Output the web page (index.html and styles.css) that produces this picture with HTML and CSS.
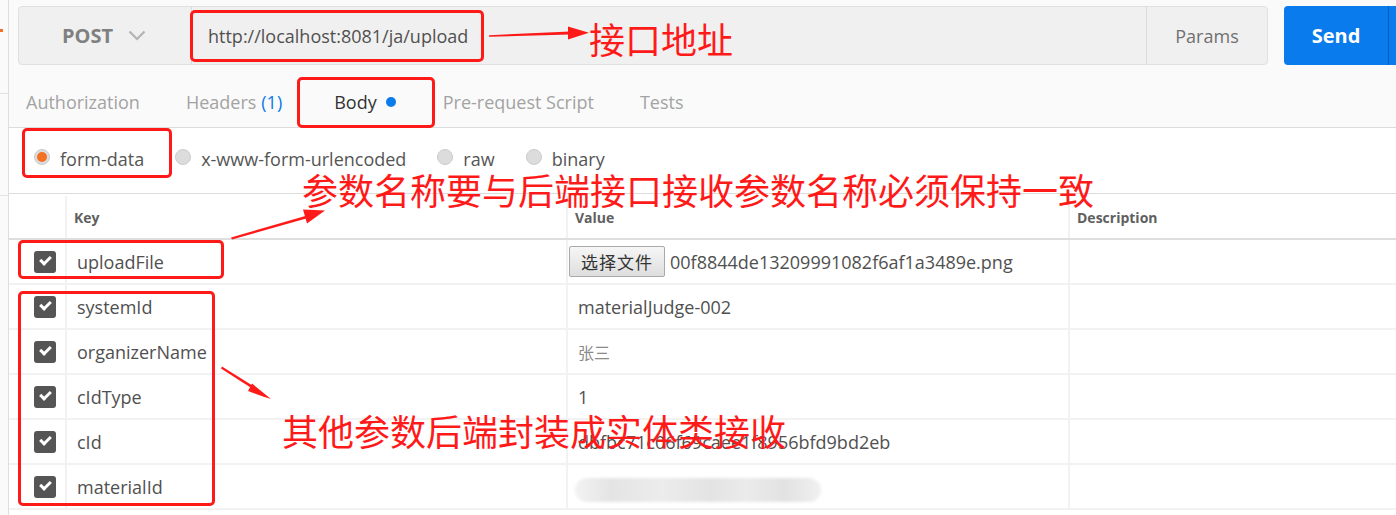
FILE: index.html
```html
<!DOCTYPE html>
<html lang="zh-CN">
<head>
    <meta charset="UTF-8">
    <title>Postman - form-data upload</title>
    <link rel="stylesheet" href="styles.css">
</head>
<body>
    <div class="app">
        <aside class="sidebar">
            <span class="sidebar-mark"></span>
            <span class="sidebar-line line-a"></span>
            <span class="sidebar-line line-b"></span>
        </aside>

        <main class="builder">
            <div class="request-bar">
                <div class="url-box">
                    <div class="method">
                        POST
                        <svg class="chevron" width="18" height="11" viewBox="0 0 18 11">
                            <path d="M1.5 1.5 L9 9 L16.5 1.5" fill="none" stroke="#b3b3b3" stroke-width="2.2"/>
                        </svg>
                    </div>
                    <div class="url">http://localhost:8081/ja/upload</div>
                    <div class="params">Params</div>
                </div>
                <div class="send-group">
                    <button class="send">Send</button>
                    <span class="send-more"></span>
                </div>
            </div>

            <nav class="tabs">
                <span class="tab">Authorization</span>
                <span class="tab">Headers <em class="count">(1)</em></span>
                <span class="tab active">Body <i class="dot"></i></span>
                <span class="tab">Pre-request Script</span>
                <span class="tab">Tests</span>
            </nav>

            <div class="body-types">
                <label class="radio checked"><span class="circle"></span>form-data</label>
                <label class="radio"><span class="circle"></span>x-www-form-urlencoded</label>
                <label class="radio"><span class="circle"></span>raw</label>
                <label class="radio"><span class="circle"></span>binary</label>
            </div>

            <div class="kv-table">
                <div class="kv-row head">
                    <div class="cell check-cell"></div>
                    <div class="cell">Key</div>
                    <div class="cell">Value</div>
                    <div class="cell">Description</div>
                </div>
                <div class="kv-row">
                    <div class="cell check-cell"><span class="check"></span></div>
                    <div class="cell">uploadFile</div>
                    <div class="cell"><button class="file-btn">选择文件</button><span class="file-name">00f8844de13209991082f6af1a3489e.png</span></div>
                    <div class="cell"></div>
                </div>
                <div class="kv-row">
                    <div class="cell check-cell"><span class="check"></span></div>
                    <div class="cell">systemId</div>
                    <div class="cell">materialJudge-002</div>
                    <div class="cell"></div>
                </div>
                <div class="kv-row">
                    <div class="cell check-cell"><span class="check"></span></div>
                    <div class="cell">organizerName</div>
                    <div class="cell muted">张三</div>
                    <div class="cell"></div>
                </div>
                <div class="kv-row">
                    <div class="cell check-cell"><span class="check"></span></div>
                    <div class="cell">cIdType</div>
                    <div class="cell">1</div>
                    <div class="cell"></div>
                </div>
                <div class="kv-row">
                    <div class="cell check-cell"><span class="check"></span></div>
                    <div class="cell">cId</div>
                    <div class="cell">dbfbc71c06f69caee1f8956bfd9bd2eb</div>
                    <div class="cell"></div>
                </div>
                <div class="kv-row">
                    <div class="cell check-cell"><span class="check"></span></div>
                    <div class="cell">materialId</div>
                    <div class="cell"><span class="blurred"></span></div>
                    <div class="cell"></div>
                </div>
            </div>
        </main>

        <!-- 标注 -->
        <div class="mark box-url"></div>
        <div class="mark box-body"></div>
        <div class="mark box-form"></div>
        <div class="mark box-file"></div>
        <div class="mark box-others"></div>

        <svg class="arrows" width="1396" height="515" viewBox="0 0 1396 515">
            <g fill="#ff1a1a">
                <polygon points="489,35.2 570,31.6 570,34.4 489,36.8"/>
                <polygon points="568,26.5 589,32.7 568,39.5"/>
                <polygon points="231,237.5 307,215.5 308,218 232,239.5"/>
                <polygon points="303,209.5 325,210.5 307,223.5"/>
                <polygon points="222,366.5 258,389 256.6,391.5 221,368.5"/>
                <polygon points="252,383.5 271,399 263,396.5 248,391"/>
            </g>
        </svg>

        <div class="note note-url">接口地址</div>
        <div class="note note-name">参数名称要与后端接口接收参数名称必须保持一致</div>
        <div class="note note-others">其他参数后端封装成实体类接收</div>
    </div>
</body>
</html>
```

FILE: styles.css
```css
:root {
    --bar-bg: #f0f0f0;
    --line: #dcdcdc;
    --row-line: #f2f2f2;
    --text: #505050;
    --tab-text: #a3a3a3;
    --blue: #097bed;
    --orange: #f47023;
    --mark: #ff1a1a;
}

html, body {
    margin: 0;
    padding: 0;
}

body {
    font-family: 'Open Sans', 'Noto Sans', 'Noto Sans CJK SC', sans-serif;
    color: var(--text);
    background-color: #fff;
    width: 1396px;
    height: 515px;
    overflow: hidden;
}

.app {
    position: relative;
    display: flex;
    height: 515px;
}

.sidebar {
    position: relative;
    width: 8px;
    flex-shrink: 0;
    background-color: #fafafa;
    border-right: 1px solid #dedede;
}

.sidebar-mark {
    position: absolute;
    left: 0;
    top: 29px;
    width: 3px;
    height: 3px;
    background-color: var(--orange);
}

.sidebar-line {
    position: absolute;
    left: 0;
    width: 8px;
    height: 1px;
    background-color: #e2e2e2;
}

.line-a { top: 93px; }
.line-b { top: 195px; }

.builder {
    flex: 1;
    min-width: 0;
}

/* 请求地址栏 */
.request-bar {
    display: flex;
    padding: 6px 0 0 9px;
    height: 59px;
    background-color: #fafafa;
}

.url-box {
    flex: 1;
    display: flex;
    background-color: var(--bar-bg);
    border: 1px solid #e0e0e0;
    border-radius: 4px;
}

.method {
    width: 173px;
    display: flex;
    align-items: center;
    padding-left: 43px;
    box-sizing: border-box;
    font-size: 20px;
    font-weight: 700;
    color: #808080;
    border-right: 1px solid #dadada;
}

.chevron {
    margin-left: 15px;
}

.url {
    flex: 1;
    display: flex;
    align-items: center;
    padding-left: 16px;
    font-size: 18px;
    color: #505050;
}

.params {
    width: 120px;
    display: flex;
    align-items: center;
    justify-content: center;
    font-size: 18px;
    color: #707070;
    border-left: 1px solid #dadada;
}

.send-group {
    width: 112px;
    margin-left: 16px;
    display: flex;
    flex-shrink: 0;
}

.send {
    width: 104px;
    height: 59px;
    border: none;
    border-radius: 4px 0 0 4px;
    background-color: var(--blue);
    color: #fff;
    font-family: inherit;
    font-size: 20px;
    font-weight: 700;
    padding: 0;
}

.send-more {
    flex: 1;
    border-left: 1px solid #0660bb;
    background-color: var(--blue);
}

/* 标签页 */
.tabs {
    display: flex;
    align-items: center;
    height: 51px;
    padding: 11px 0 0 17px;
    box-sizing: content-box;
    background-color: #fafafa;
    border-bottom: 1px solid #dcdcdc;
    font-size: 18px;
    color: var(--tab-text);
}

.tab {
    margin-right: 46px;
    white-space: nowrap;
    display: flex;
    align-items: center;
}

.tab.active {
    color: #333;
    margin-left: 6px;
    margin-right: 47px;
}

.count {
    font-style: normal;
    color: var(--blue);
    margin-left: 5px;
}

.dot {
    display: inline-block;
    width: 10px;
    height: 10px;
    border-radius: 50%;
    background-color: var(--blue);
    margin-left: 9px;
}

/* body 类型 */
.body-types {
    display: flex;
    align-items: center;
    height: 61px;
    padding: 0 0 4px 25px;
    border-bottom: 1px solid #dcdcdc;
    font-size: 18px;
    color: #555;
}

.radio {
    display: flex;
    align-items: center;
    margin-right: 31px;
}

.circle {
    width: 16px;
    height: 16px;
    border-radius: 50%;
    background-color: #dcdcdc;
    border: 1px solid #cbcbcb;
    box-sizing: border-box;
    margin-right: 10px;
    margin-top: -4px;
    display: flex;
    align-items: center;
    justify-content: center;
}

.radio.checked .circle::after {
    content: "";
    width: 10px;
    height: 10px;
    border-radius: 50%;
    background-color: var(--orange);
}

/* 参数表格 */
.kv-table {
    font-size: 18px;
}

.kv-row {
    display: grid;
    grid-template-columns: 56px 501px 502px 1fr;
    height: 45px;
    border-bottom: 2px solid var(--row-line);
    box-sizing: border-box;
}

.kv-row.head {
    height: 46px;
    padding-top: 2px;
    border-bottom: 2px solid #dedede;
    font-size: 14px;
    font-weight: 700;
    color: #606060;
}

.cell {
    display: flex;
    align-items: center;
    padding-left: 10px;
    border-left: 2px solid var(--row-line);
    white-space: nowrap;
    overflow: hidden;
}

.head .cell {
    padding-left: 7px;
}

.kv-row .cell:first-child {
    border-left: none;
}

.check-cell {
    justify-content: flex-end;
    padding: 0 9px 0 0;
}

.check {
    width: 22px;
    height: 22px;
    border-radius: 3px;
    background-color: #555;
    position: relative;
}

.check::after {
    content: "";
    position: absolute;
    left: 6px;
    top: 5px;
    width: 8px;
    height: 4px;
    border-left: 3px solid #fff;
    border-bottom: 3px solid #fff;
    transform: rotate(-45deg);
}

.muted {
    color: #8a8a8a;
    font-family: 'Noto Sans CJK SC', sans-serif;
    font-size: 16px;
}

.file-btn {
    height: 31px;
    width: 96px;
    padding: 0;
    margin-left: -9px;
    margin-right: 5px;
    font-family: 'Noto Sans CJK SC', sans-serif;
    font-size: 17px;
    letter-spacing: 1px;
    color: #333;
    background: linear-gradient(#f6f6f6, #dedede);
    border: 1px solid #a9a9a9;
    border-radius: 2px;
}

.file-name {
    color: #505050;
}

.blurred {
    width: 246px;
    height: 24px;
    margin-top: 6px;
    margin-left: -3px;
    border-radius: 12px;
    background: linear-gradient(90deg, #f2f2f2 0%, #e4e4e4 15%, #ececec 35%, #e3e3e3 55%, #ebebeb 70%, #e2e2e2 85%, #f0f0f0 100%);
    filter: blur(1.5px);
}

/* 红色标注 */
.mark {
    position: absolute;
    border: 3px solid var(--mark);
    border-radius: 5px;
    box-sizing: border-box;
}

.box-url { left: 190px; top: 10px; width: 294px; height: 52px; }
.box-body { left: 297px; top: 77px; width: 138px; height: 51px; }
.box-form { left: 22px; top: 128px; width: 150px; height: 50px; }
.box-file { left: 18px; top: 240px; width: 206px; height: 39px; }
.box-others { left: 18px; top: 291px; width: 197px; height: 215px; }

.arrows {
    position: absolute;
    left: 0;
    top: 0;
}

.note {
    position: absolute;
    font-family: 'Noto Sans CJK SC', sans-serif;
    font-size: 36px;
    line-height: 1;
    color: var(--mark);
    white-space: nowrap;
}

.note-url { left: 589px; top: 20px; }
.note-name { left: 302px; top: 171px; }
.note-others { left: 282px; top: 412px; }
```
